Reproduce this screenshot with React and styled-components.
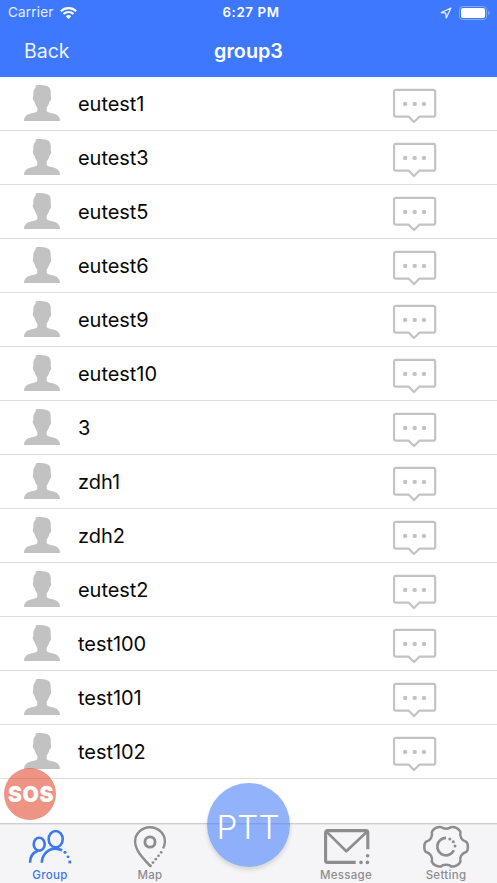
import React from "react";
import styled, { createGlobalStyle } from "styled-components";

const GlobalStyle = createGlobalStyle`
    * {
        box-sizing: border-box;
    }
    body {
        margin: 0;
        background: #ffffff;
        font-family: Inter, "Liberation Sans", sans-serif;
    }
`;

const Screen = styled.div`
    position: relative;
    display: flex;
    flex-direction: column;
    width: 100%;
    height: 100vh;
    overflow: hidden;
    background: #ffffff;
`;

const Header = styled.header`
    flex: none;
    height: 77px;
    background: #3d78ff;
    color: #ffffff;
`;

const StatusBar = styled.div`
    display: grid;
    grid-template-columns: 1fr auto 1fr;
    align-items: center;
    height: 25px;
    padding: 0 6px 0 8px;
`;

const Carrier = styled.div`
    display: flex;
    align-items: center;
    gap: 6px;
    font-size: 13.5px;
    line-height: 25px;
    letter-spacing: 0.2px;
    color: #e6efff;
`;

const Clock = styled.div`
    padding-left: 3px;
    font-size: 13.3px;
    font-weight: 600;
    line-height: 25px;
    letter-spacing: 0.6px;
`;

const StatusIcons = styled.div`
    display: flex;
    align-items: center;
    justify-content: flex-end;
    gap: 7px;
`;

const NavBar = styled.nav`
    display: grid;
    grid-template-columns: 1fr auto 1fr;
    align-items: center;
    height: 52px;
    padding: 0 24px;
`;

const BackButton = styled.button`
    justify-self: start;
    padding: 0;
    border: none;
    background: none;
    color: #eef4ff;
    font-family: inherit;
    font-size: 19.5px;
    line-height: 24px;
    cursor: pointer;
`;

const Title = styled.h1`
    margin: 0;
    font-size: 19.8px;
    font-weight: 600;
    line-height: 24px;
`;

const List = styled.ul`
    flex: 1;
    margin: 0;
    padding: 0;
    list-style: none;
`;

const Row = styled.li`
    display: flex;
    align-items: center;
    height: 54px;
    padding: 0 60px 0 24px;
    border-bottom: 1px solid #dedee0;

    > svg {
        margin-bottom: 1px;
    }
`;

const Name = styled.span`
    flex: 1;
    margin-left: 18px;
    padding-top: 1px;
    color: #080808;
    font-size: 20px;
    line-height: 24px;
    letter-spacing: -0.05px;
`;

const TabBar = styled.footer`
    flex: none;
    display: grid;
    grid-template-columns: 100px 100px 96px 100px 100px;
    height: 60px;
    border-top: 1px solid #cfcfd2;
    background: #f5f5f7;
    box-shadow: inset 0 1px 0 #e6e6e8;
`;

const Tab = styled.button`
    display: flex;
    flex-direction: column;
    align-items: center;
    padding: 1px 0 0;
    border: none;
    background: none;
    color: ${({ $active }) => ($active ? "#3d78f0" : "#8d8d8f")};
    font-family: inherit;
    cursor: pointer;

    svg {
        overflow: visible;
    }
`;

const TabLabel = styled.span`
    padding-top: 1px;
    font-size: 11.5px;
    font-weight: 500;
    line-height: 14px;
    letter-spacing: 0.3px;
`;

const RoundButton = styled.button`
    position: absolute;
    display: flex;
    align-items: center;
    justify-content: center;
    padding: 0;
    border: none;
    border-radius: 50%;
    color: #ffffff;
    cursor: pointer;
`;

const SosButton = styled(RoundButton)`
    left: 4px;
    bottom: 63px;
    width: 52px;
    height: 52px;
    padding-left: 2px;
    background: rgba(227, 76, 52, 0.6);
    font-family: Inter, sans-serif;
    font-size: 21px;
    font-weight: 900;
    letter-spacing: 0.5px;
`;

const PttButton = styled(RoundButton)`
    left: 207px;
    bottom: 16px;
    width: 83px;
    height: 84px;
    padding: 3px 1px 0 0;
    background: rgba(61, 120, 250, 0.56);
    box-shadow: 0 3px 4px rgba(0, 0, 0, 0.13);
    font-family: Inter, sans-serif;
    font-size: 33.2px;
    font-weight: 300;
`;

const WifiIcon = () => (
    <svg width="17" height="12" viewBox="0 0 17 12" fill="none" stroke="#fff" strokeWidth="2.1">
        <path d="M.8 4.3a11 11 0 0 1 15.4 0" />
        <path d="M3.5 7.1a7.1 7.1 0 0 1 10 0" />
        <path d="M8.5 12 5.8 9.3a3.8 3.8 0 0 1 5.4 0Z" fill="#fff" stroke="none" />
    </svg>
);

const LocationIcon = () => (
    <svg width="12" height="12" viewBox="0 0 12 12" fill="none" stroke="#e6efff" strokeWidth="1.2">
        <path d="M10.9 1 1.2 5.6l4.6.5.5 4.8Z" strokeLinejoin="round" />
    </svg>
);

const BatteryIcon = () => (
    <svg width="32" height="14" viewBox="0 0 32 14">
        <rect x=".5" y=".5" width="27" height="13" rx="3.2" fill="none" stroke="#86aaff" />
        <rect x="2" y="2" width="24" height="10" rx="2" fill="#fff" />
        <path d="M29.3 4.8c1.8.6 1.8 3.8 0 4.4Z" fill="#86aaff" />
    </svg>
);

const AvatarIcon = () => (
    <svg width="36" height="36" viewBox="0 0 36 36" fill="#c2c2c2">
        <path d="M12.2.2c4-.5 9.2-.2 12.2 1.5 2.2 1.3 2.5 4.3 2.3 8.3 0 1.3.6 1.8.5 3.3-.1 1.7-.9 2.6-1.6 3.4-.6 2.2-1.7 4.2-2.9 6v3.2c.8 1.7 3.6 1.7 6.6 2.6 4.3 1.2 6.7 3.4 6.7 7.5H0c0-4.1 2.4-6.3 6.7-7.5 3-.9 5.8-.9 6.6-2.6v-3.2c-1.2-1.8-2.3-3.8-2.9-6-.7-.8-1.5-1.7-1.6-3.4-.1-1.5.5-2 .5-3.3-.1-3.3.2-5.5 2.3-7.2-.3-.9 0-1.8.6-2.6Z" />
    </svg>
);

const ChatIcon = () => (
    <svg width="44" height="36" viewBox="0 0 44 36" fill="none" stroke="#c3c3c3" strokeWidth="2.2">
        <path d="M3 1.8h37.2a2 2 0 0 1 2 2v22.9a2 2 0 0 1-2 2H26.3L21 34l-5.3-5.3H3a2 2 0 0 1-2-2V3.8a2 2 0 0 1 2-2Z" strokeLinejoin="round" />
        <g fill="#c3c3c3" stroke="none">
            <circle cx="12.2" cy="15.9" r="2.2" />
            <circle cx="21.7" cy="15.9" r="2.2" />
            <circle cx="31" cy="15.9" r="2.2" />
        </g>
    </svg>
);

const ChatButton = styled.button`
    display: flex;
    padding: 4px 0 0;
    border: none;
    background: none;
    cursor: pointer;
`;

const GroupIcon = () => (
    <svg width="50" height="42" viewBox="0 0 50 42" fill="none" stroke="currentColor" strokeWidth="2.6">
        <ellipse cx="14.2" cy="19.2" rx="5.5" ry="6.4" />
        <ellipse cx="30.7" cy="14.2" rx="7" ry="8.2" />
        <path d="M5 37.8c0-6 2.4-10 7.8-12.1M16.8 37.8c.2-7.6 5.6-14.2 13.4-14.2 2.7 0 4.8.5 6.8 1.8" />
        <g fill="currentColor" stroke="none">
            <circle cx="40" cy="27.3" r="1.5" />
            <circle cx="43" cy="31.8" r="1.4" />
            <rect x="43.4" y="35.6" width="2.8" height="2.8" />
        </g>
    </svg>
);

const MapIcon = () => (
    <svg width="50" height="42" viewBox="0 0 50 42" fill="none" stroke="currentColor" strokeWidth="2.4">
        <path d="M25.2 41C18.5 33.7 10.1 25.6 10.1 16.6a14.9 14.4 0 0 1 29.8 0c0 2.5-.7 4.7-1.8 7" />
        <circle cx="25" cy="17" r="5.1" strokeWidth="2.9" />
        <g fill="currentColor" stroke="none">
            <circle cx="36.2" cy="27.3" r="1.4" />
            <circle cx="33.5" cy="30.8" r="1.4" />
            <circle cx="30.8" cy="34.2" r="1.4" />
            <circle cx="28" cy="37.6" r="1.4" />
            <circle cx="25.4" cy="40.8" r="1.5" />
        </g>
    </svg>
);

const MessageIcon = () => (
    <svg width="50" height="42" viewBox="0 0 50 42" fill="none" stroke="currentColor" strokeWidth="3.1">
        <path d="M34.7 37.4H6.6a2 2 0 0 1-2-2V7.6a2 2 0 0 1 2-2h38.2a2 2 0 0 1 2 2v16.7" />
        <path d="m5.2 6.4 20.1 19.8L46.2 6.4" strokeLinejoin="round" strokeWidth="2.7" />
        <g fill="currentColor" stroke="none">
            <circle cx="40" cy="37.4" r="1.8" />
            <circle cx="46.4" cy="37.4" r="1.8" />
            <circle cx="46.6" cy="30.8" r="1.8" />
        </g>
    </svg>
);

const SettingIcon = () => (
    <svg width="50" height="42" viewBox="0 0 50 42" fill="none" stroke="currentColor" strokeWidth="2.5">
        <path d="M20.2 1.3c1.7 2.2 8.2 2.2 9.8 0 3.8-.8 8.4 2 9.5 5-1.2 4.2 1.2 8.5 5.6 9.7 2.4 1.7 2.4 8.6 0 10.2-4.4 1.2-6.8 5.2-5.6 9.5-1.1 3-5.7 5.7-9.5 5-1.6-2.4-8.1-2.4-9.8 0-3.8.7-8.4-2-9.4-5 1.1-4.3-1.3-8.3-5.7-9.5-2.4-1.6-2.4-8.5 0-10.2 4.4-1.2 6.8-5.5 5.7-9.7 1-3 5.6-5.8 9.4-5Z" strokeLinejoin="round" transform="translate(0 .8)" />
        <path d="M25 12.9a8.7 8.7 0 1 0 7.9 12.4" strokeWidth="2.7" />
        <g fill="currentColor" stroke="none">
            <circle cx="28.8" cy="13.9" r="1.5" />
            <circle cx="32.3" cy="16.7" r="1.5" />
            <circle cx="34" cy="21" r="1.5" />
        </g>
    </svg>
);

const members = [
    "eutest1",
    "eutest3",
    "eutest5",
    "eutest6",
    "eutest9",
    "eutest10",
    "3",
    "zdh1",
    "zdh2",
    "eutest2",
    "test100",
    "test101",
    "test102",
];

const MemberRow = ({ name }) => (
    <Row>
        <AvatarIcon />
        <Name>{name}</Name>
        <ChatButton>
            <ChatIcon />
        </ChatButton>
    </Row>
);

const TabItem = ({ icon, label, active }) => (
    <Tab $active={active}>
        {icon}
        <TabLabel>{label}</TabLabel>
    </Tab>
);

const App = () => {
    return (
        <Screen>
            <GlobalStyle />
            <Header>
                <StatusBar>
                    <Carrier>
                        Carrier
                        <WifiIcon />
                    </Carrier>
                    <Clock>6:27 PM</Clock>
                    <StatusIcons>
                        <LocationIcon />
                        <BatteryIcon />
                    </StatusIcons>
                </StatusBar>
                <NavBar>
                    <BackButton>Back</BackButton>
                    <Title>group3</Title>
                </NavBar>
            </Header>
            <List>
                {members.map((name) => (
                    <MemberRow key={name} name={name} />
                ))}
            </List>
            <TabBar>
                <TabItem icon={<GroupIcon />} label="Group" active />
                <TabItem icon={<MapIcon />} label="Map" />
                <span />
                <TabItem icon={<MessageIcon />} label="Message" />
                <TabItem icon={<SettingIcon />} label="Setting" />
            </TabBar>
            <SosButton>SOS</SosButton>
            <PttButton>PTT</PttButton>
        </Screen>
    );
};

export default App;
